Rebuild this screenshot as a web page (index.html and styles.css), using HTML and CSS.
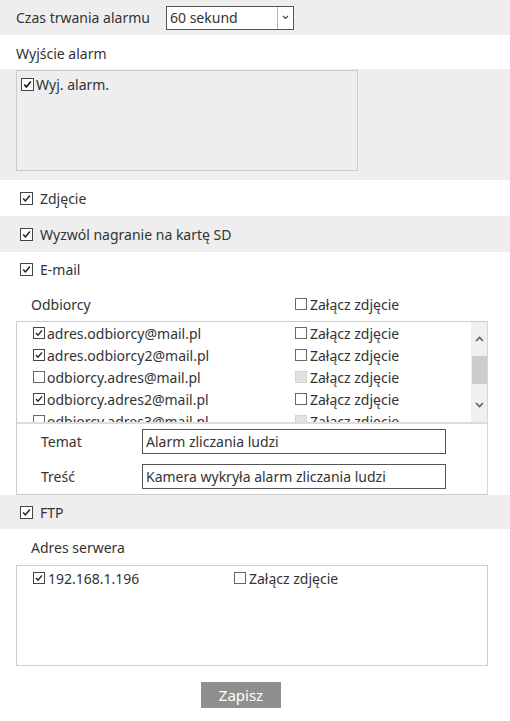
FILE: index.html
```html
<!DOCTYPE html>
<html>
<head>
<meta charset="utf-8">
<link rel="stylesheet" href="styles.css">
</head>
<body>
<div class="page">
  <div class="row grey h35">
    <span class="label first">Czas trwania alarmu</span>
    <div class="select">
      <span class="select-text">60 sekund</span>
      <span class="select-arrow"><svg width="7" height="5" viewBox="0 0 7 5"><path d="M1 1 L3.5 3.5 L6 1" fill="none" stroke="#444" stroke-width="1.2"/></svg></span>
    </div>
  </div>
  <div class="row h34 low"><span class="label">Wyjście alarm</span></div>
  <div class="alarm-section">
    <div class="alarm-box">
      <div class="alarm-item"><span class="cb on"><svg viewBox="0 0 13 13"><path d="M2.5 6.5 L5.2 9.3 L10.5 3" fill="none" stroke="#222" stroke-width="2"/></svg></span><span>Wyj. alarm.</span></div>
    </div>
  </div>
  <div class="row h36 indent"><span class="cb on"><svg viewBox="0 0 13 13"><path d="M2.5 6.5 L5.2 9.3 L10.5 3" fill="none" stroke="#222" stroke-width="1.8"/></svg></span><span class="cb-label">Zdjęcie</span></div>
  <div class="row grey h36 indent"><span class="cb on"><svg viewBox="0 0 13 13"><path d="M2.5 6.5 L5.2 9.3 L10.5 3" fill="none" stroke="#222" stroke-width="1.8"/></svg></span><span class="cb-label">Wyzwól nagranie na kartę SD</span></div>
  <div class="row h35 indent"><span class="cb on"><svg viewBox="0 0 13 13"><path d="M2.5 6.5 L5.2 9.3 L10.5 3" fill="none" stroke="#222" stroke-width="1.8"/></svg></span><span class="cb-label">E-mail</span></div>

  <div class="sub-head h34">
    <span class="col1 head-label">Odbiorcy</span>
    <span class="col2"><span class="cb small"></span><span>Załącz zdjęcie</span></span>
  </div>
  <div class="mail-box">
    <div class="list">
      <div class="list-rows">
        <div class="list-row"><span class="col1b"><span class="cb small on"><svg viewBox="0 0 12 12"><path d="M2.3 6 L4.8 8.6 L9.7 2.8" fill="none" stroke="#222" stroke-width="1.6"/></svg></span><span>adres.odbiorcy@mail.pl</span></span><span class="col2"><span class="cb small"></span><span>Załącz zdjęcie</span></span></div>
        <div class="list-row"><span class="col1b"><span class="cb small on"><svg viewBox="0 0 12 12"><path d="M2.3 6 L4.8 8.6 L9.7 2.8" fill="none" stroke="#222" stroke-width="1.6"/></svg></span><span>adres.odbiorcy2@mail.pl</span></span><span class="col2"><span class="cb small"></span><span>Załącz zdjęcie</span></span></div>
        <div class="list-row"><span class="col1b"><span class="cb small"></span><span>odbiorcy.adres@mail.pl</span></span><span class="col2"><span class="cb small disabled"></span><span>Załącz zdjęcie</span></span></div>
        <div class="list-row"><span class="col1b"><span class="cb small on"><svg viewBox="0 0 12 12"><path d="M2.3 6 L4.8 8.6 L9.7 2.8" fill="none" stroke="#222" stroke-width="1.6"/></svg></span><span>odbiorcy.adres2@mail.pl</span></span><span class="col2"><span class="cb small"></span><span>Załącz zdjęcie</span></span></div>
        <div class="list-row"><span class="col1b"><span class="cb small"></span><span>odbiorcy.adres3@mail.pl</span></span><span class="col2"><span class="cb small disabled"></span><span>Załącz zdjęcie</span></span></div>
      </div>
      <div class="scrollbar">
        <span class="sb-btn"><svg width="9" height="6" viewBox="0 0 9 6"><path d="M1 5 L4.5 1.5 L8 5" fill="none" stroke="#606060" stroke-width="1.6"/></svg></span>
        <span class="sb-thumb"></span>
        <span class="sb-btn down"><svg width="9" height="6" viewBox="0 0 9 6"><path d="M1 1 L4.5 4.5 L8 1" fill="none" stroke="#606060" stroke-width="1.6"/></svg></span>
      </div>
    </div>
    <div class="fields">
      <div class="field"><span class="field-label">Temat</span><span class="input">Alarm zliczania ludzi</span></div>
      <div class="field"><span class="field-label">Treść</span><span class="input">Kamera wykryła alarm zliczania ludzi</span></div>
    </div>
  </div>

  <div class="row grey h34 indent"><span class="cb on"><svg viewBox="0 0 13 13"><path d="M2.5 6.5 L5.2 9.3 L10.5 3" fill="none" stroke="#222" stroke-width="1.8"/></svg></span><span class="cb-label">FTP</span></div>
  <div class="sub-head h36">
    <span class="head-label">Adres serwera</span>
  </div>
  <div class="ftp-box">
    <div class="ftp-row"><span class="ftp-col1"><span class="cb small on"><svg viewBox="0 0 12 12"><path d="M2.3 6 L4.8 8.6 L9.7 2.8" fill="none" stroke="#222" stroke-width="1.6"/></svg></span><span>192.168.1.196</span></span><span class="col2"><span class="cb small"></span><span>Załącz zdjęcie</span></span></div>
  </div>
  <div class="actions"><button class="btn">Zapisz</button></div>
</div>
</body>
</html>
```
FILE: styles.css
```css
* { box-sizing: border-box; }
body {
  margin: 0;
  background: #fff;
  font-family: "Noto Sans", "Open Sans", sans-serif;
  font-size: 14px;
  color: #333;
}
.page { width: 510px; }
.row {
  display: flex;
  align-items: center;
  padding-left: 16px;
}
.row.low { padding-top: 3px; }
.row.indent { padding-left: 20px; }
.grey { background: #eeeeee; }
.h34 { height: 34px; }
.h35 { height: 35px; }
.h36 { height: 36px; }
.label { white-space: nowrap; }
.label.first { width: 150px; }
.select {
  width: 128px;
  height: 24px;
  margin-top: 0;
  border: 1px solid #555;
  background: #fff;
  display: flex;
  align-items: stretch;
}
.select-text { flex: 1; padding-left: 3px; line-height: 22px; }
.select-arrow {
  width: 16px;
  border-left: 1px solid #b5b5b5;
  display: flex;
  align-items: center;
  justify-content: center;
}
.alarm-section {
  background: #eeeeee;
  height: 111px;
  padding: 1px 0 0 16px;
}
.alarm-box {
  width: 342px;
  height: 101px;
  border: 1px solid #cccccc;
  padding: 4px 0 0 4px;
}
.alarm-item { display: flex; align-items: center; gap: 2px; }
.cb {
  width: 13px;
  height: 13px;
  border: 1px solid #444;
  background: #fff;
  display: inline-flex;
  flex: none;
}
.cb svg { width: 100%; height: 100%; display: block; }
.cb.small { width: 12px; height: 12px; border-color: #666; }
.cb.small.on { border-color: #444; }
.cb.disabled { background: #e2e2e2; border-color: #d2d2d2; }
.cb-label { margin-left: 7px; }
.sub-head {
  display: flex;
  align-items: center;
  padding-left: 31px;
}
.col1 { width: 264px; }
.col2 { display: inline-flex; align-items: center; gap: 3px; }
.mail-box {
  margin-left: 16px;
  width: 472px;
  height: 174px;
  border: 1px solid #cccccc;
  border-right-color: #d6d6d6;
}
.list {
  height: 102px;
  display: flex;
  border-bottom: 2px solid #dcdcdc;
  overflow: hidden;
}
.list-rows { flex: 1; padding-left: 16px; }
.list-row { height: 22px; display: flex; align-items: center; }
.col1b { width: 262px; display: inline-flex; align-items: center; gap: 2px; }
.scrollbar {
  width: 16px;
  background: #f0f0f0;
  display: flex;
  flex-direction: column;
  align-items: center;
}
.sb-btn { height: 34px; display: flex; align-items: center; justify-content: center; }
.sb-btn.down { height: 30px; }
.sb-thumb { width: 15px; height: 28px; background: #cdcdcd; margin-bottom: 6px; }
.fields { padding-top: 0; }
.field { display: flex; align-items: center; height: 35px; }
.field-label { width: 125px; padding-left: 24px; }
.input {
  width: 304px;
  height: 25px;
  border: 1px solid #555;
  background: #fff;
  padding-left: 3px;
  line-height: 23px;
  white-space: nowrap;
}
.ftp-box {
  margin-left: 16px;
  width: 472px;
  height: 101px;
  border: 1px solid #cccccc;
  padding: 2px 0 0 16px;
}
.ftp-row { display: flex; align-items: center; height: 20px; }
.ftp-col1 { width: 201px; display: inline-flex; align-items: center; gap: 3px; }
.actions { padding: 16px 0 0 201px; }
.btn {
  width: 80px;
  height: 26px;
  border: none;
  background: #8f8f8f;
  color: #fff;
  font-family: inherit;
  font-size: 15px;
  padding: 0;
}
```
